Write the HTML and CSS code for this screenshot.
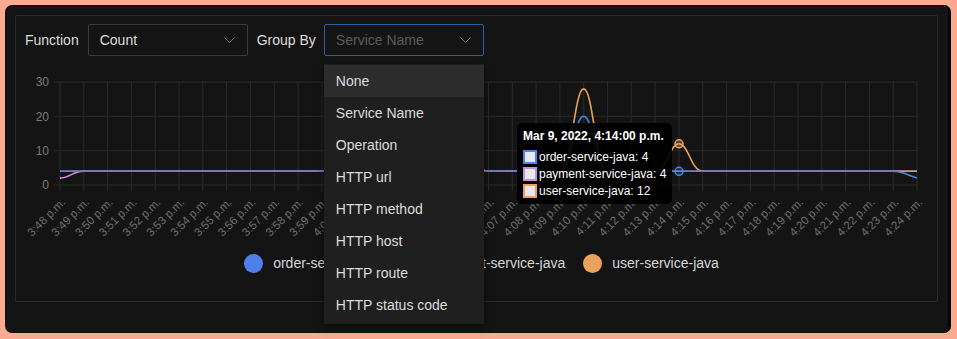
FILE: index.html
```html
<!DOCTYPE html>
<html lang="en">
<head>
    <meta charset="UTF-8">
    <meta name="viewport" content="width=device-width, initial-scale=1.0">
    <title>Service Metrics</title>
    <link rel="stylesheet" href="styles.css">
</head>
<body>
    <div class="frame">
        <div class="card">
            <div class="controls">
                <span class="label">Function</span>
                <div class="select">
                    <span class="value">Count</span>
                    <svg class="chevron" width="11" height="6" viewBox="0 0 11 6"><path d="M0.5 0.5 L5.5 5.5 L10.5 0.5"/></svg>
                </div>
                <span class="label">Group By</span>
                <div class="select select-focus">
                    <span class="value placeholder">Service Name</span>
                    <svg class="chevron" width="11" height="6" viewBox="0 0 11 6"><path d="M0.5 0.5 L5.5 5.5 L10.5 0.5"/></svg>
                    <ul class="menu">
                        <li class="active">None</li>
                        <li>Service Name</li>
                        <li>Operation</li>
                        <li>HTTP url</li>
                        <li>HTTP method</li>
                        <li>HTTP host</li>
                        <li>HTTP route</li>
                        <li>HTTP status code</li>
                    </ul>
                </div>
            </div>

            <div class="chart">
                <svg width="924" height="184" viewBox="16 60 924 184">
                    <!-- grid -->
                    <path class="grid" d="M54 82 H917 M54 116.3 H917 M54 150.7 H917 M54 185 H917
                        M60 82 V191 M83.8 82 V191 M107.6 82 V191 M131.4 82 V191 M155.2 82 V191 M179 82 V191
                        M202.8 82 V191 M226.6 82 V191 M250.4 82 V191 M274.3 82 V191 M298.1 82 V191 M321.9 82 V191
                        M345.7 82 V191 M369.5 82 V191 M393.3 82 V191 M417.1 82 V191 M440.9 82 V191 M464.7 82 V191
                        M488.5 82 V191 M512.3 82 V191 M536.1 82 V191 M559.9 82 V191 M583.7 82 V191 M607.5 82 V191
                        M631.3 82 V191 M655.1 82 V191 M679 82 V191 M702.8 82 V191 M726.6 82 V191 M750.4 82 V191
                        M774.2 82 V191 M798 82 V191 M821.8 82 V191 M845.6 82 V191 M869.4 82 V191 M893.2 82 V191
                        M917 82 V191"/>

                    <g class="y-labels">
                        <text x="49" y="86">30</text>
                        <text x="49" y="120.5">20</text>
                        <text x="49" y="155">10</text>
                        <text x="49" y="189">0</text>
                    </g>

                    <g class="x-labels">
                        <text transform="translate(66,203) rotate(-45)">3:48 p.m.</text>
                        <text transform="translate(89.8,203) rotate(-45)">3:49 p.m.</text>
                        <text transform="translate(113.6,203) rotate(-45)">3:50 p.m.</text>
                        <text transform="translate(137.4,203) rotate(-45)">3:51 p.m.</text>
                        <text transform="translate(161.2,203) rotate(-45)">3:52 p.m.</text>
                        <text transform="translate(185,203) rotate(-45)">3:53 p.m.</text>
                        <text transform="translate(208.8,203) rotate(-45)">3:54 p.m.</text>
                        <text transform="translate(232.6,203) rotate(-45)">3:55 p.m.</text>
                        <text transform="translate(256.4,203) rotate(-45)">3:56 p.m.</text>
                        <text transform="translate(280.3,203) rotate(-45)">3:57 p.m.</text>
                        <text transform="translate(304.1,203) rotate(-45)">3:58 p.m.</text>
                        <text transform="translate(327.9,203) rotate(-45)">3:59 p.m.</text>
                        <text transform="translate(351.7,203) rotate(-45)">4:00 p.m.</text>
                        <text transform="translate(375.5,203) rotate(-45)">4:01 p.m.</text>
                        <text transform="translate(399.3,203) rotate(-45)">4:02 p.m.</text>
                        <text transform="translate(423.1,203) rotate(-45)">4:03 p.m.</text>
                        <text transform="translate(446.9,203) rotate(-45)">4:04 p.m.</text>
                        <text transform="translate(470.7,203) rotate(-45)">4:05 p.m.</text>
                        <text transform="translate(494.5,203) rotate(-45)">4:06 p.m.</text>
                        <text transform="translate(518.3,203) rotate(-45)">4:07 p.m.</text>
                        <text transform="translate(542.1,203) rotate(-45)">4:08 p.m.</text>
                        <text transform="translate(565.9,203) rotate(-45)">4:09 p.m.</text>
                        <text transform="translate(589.7,203) rotate(-45)">4:10 p.m.</text>
                        <text transform="translate(613.5,203) rotate(-45)">4:11 p.m.</text>
                        <text transform="translate(637.3,203) rotate(-45)">4:12 p.m.</text>
                        <text transform="translate(661.1,203) rotate(-45)">4:13 p.m.</text>
                        <text transform="translate(685,203) rotate(-45)">4:14 p.m.</text>
                        <text transform="translate(708.8,203) rotate(-45)">4:15 p.m.</text>
                        <text transform="translate(732.6,203) rotate(-45)">4:16 p.m.</text>
                        <text transform="translate(756.4,203) rotate(-45)">4:17 p.m.</text>
                        <text transform="translate(780.2,203) rotate(-45)">4:18 p.m.</text>
                        <text transform="translate(804,203) rotate(-45)">4:19 p.m.</text>
                        <text transform="translate(827.8,203) rotate(-45)">4:20 p.m.</text>
                        <text transform="translate(851.6,203) rotate(-45)">4:21 p.m.</text>
                        <text transform="translate(875.4,203) rotate(-45)">4:22 p.m.</text>
                        <text transform="translate(899.2,203) rotate(-45)">4:23 p.m.</text>
                        <text transform="translate(923,203) rotate(-45)">4:24 p.m.</text>
                    </g>

                    <!-- series: user, payment, order (order drawn on top) -->
                    <path class="line line-user" d="M60 171.3 H440.9 C452.8 171.3 455 150.7 464.7 150.7 C474.4 150.7 476.6 171.3 488.5 171.3 H559.9 C571.8 171.3 574 88.9 583.7 88.9 C593.4 88.9 595.6 171.3 607.5 171.3 H655.1 C667 171.3 669.2 143.8 679 143.8 C688.7 143.8 690.9 171.3 702.8 171.3 H917"/>
                    <path class="line line-payment" d="M60 178.1 C70 178.1 72 171.3 83.8 171.3 H917"/>
                    <path class="line line-order" d="M60 171.3 H559.9 C571.8 171.3 574 116.3 583.7 116.3 C593.4 116.3 595.6 171.3 607.5 171.3 H893.2 C903 171.3 907 175 917 178.1"/>

                    <circle class="point point-user" cx="679" cy="143.8" r="4"/>
                    <circle class="point point-order" cx="679" cy="171.3" r="4"/>
                </svg>

                <div class="tooltip">
                    <div class="tooltip-title">Mar 9, 2022, 4:14:00 p.m.</div>
                    <div class="tooltip-row"><span class="swatch swatch-order"></span>order-service-java: 4</div>
                    <div class="tooltip-row"><span class="swatch swatch-payment"></span>payment-service-java: 4</div>
                    <div class="tooltip-row"><span class="swatch swatch-user"></span>user-service-java: 12</div>
                </div>
            </div>

            <div class="legend">
                <div class="legend-item"><span class="dot dot-order"></span>order-service-java</div>
                <div class="legend-item"><span class="dot dot-payment"></span>payment-service-java</div>
                <div class="legend-item"><span class="dot dot-user"></span>user-service-java</div>
            </div>
        </div>
    </div>
</body>
</html>
```

FILE: styles.css
```css
/* Page background */
body {
    margin: 0;
    height: 339px;
    overflow: hidden;
    background: #fbab8f;
    font-family: 'Liberation Sans', Arial, sans-serif;
}

/* Dark window */
.frame {
    margin: 5px 6px 0 5px;
    height: 328px;
    padding: 10px;
    box-sizing: border-box;
    background: #141414;
    border-radius: 7px;
    border-right: 3px solid #050505;
}

/* Panel with border */
.card {
    height: 287px;
    box-sizing: border-box;
    border: 1px solid #2b2b2b;
    border-radius: 2px;
}

/* Top controls */
.controls {
    display: flex;
    align-items: center;
    gap: 9px;
    padding: 8px 9px 0;
}

.label {
    font-size: 14px;
    color: #dcdcdc;
}

.select {
    position: relative;
    width: 160px;
    height: 32px;
    box-sizing: border-box;
    display: flex;
    align-items: center;
    justify-content: space-between;
    padding: 0 12px 0 11px;
    border: 1px solid #3a3a3a;
    border-radius: 2px;
    background: #141414;
}

.select-focus {
    border-color: #2f5e9e;
    margin-left: -1px;
}

.value {
    font-size: 14px;
    color: #dcdcdc;
}

.placeholder {
    color: #5c5c5c;
}

.chevron path {
    fill: none;
    stroke: #6e6e6e;
    stroke-width: 1;
}

/* Dropdown menu */
.menu {
    position: absolute;
    top: 39px;
    left: -1px;
    width: 160px;
    margin: 0;
    padding: 1px 0 3px;
    list-style: none;
    background: #1f1f1f;
    box-shadow: 0 3px 8px rgba(0, 0, 0, 0.5);
    z-index: 5;
}

.menu li {
    height: 32px;
    line-height: 32px;
    padding: 0 12px;
    font-size: 14px;
    color: #dcdcdc;
}

.menu li.active {
    background: #2c2c2c;
}

/* Chart */
.chart {
    position: relative;
    margin-top: 4px;
    height: 184px;
}

.chart svg {
    display: block;
}

.grid {
    fill: none;
    stroke: #2a2a2a;
    stroke-width: 1;
}

.y-labels text {
    font-size: 12px;
    fill: #7a7a7a;
    text-anchor: end;
}

.x-labels text {
    font-size: 11.5px;
    fill: #6f6f6f;
    text-anchor: end;
}

.line {
    fill: none;
    stroke-width: 1.6;
}

.line-order { stroke: #4f82e6; }
.line-payment { stroke: #c690d2; }
.line-user { stroke: #e9a15c; }

.point {
    stroke-width: 1.5;
}

.point-order {
    fill: rgba(79, 130, 230, 0.15);
    stroke: #4f82e6;
}

.point-user {
    fill: rgba(233, 161, 92, 0.3);
    stroke: #e9a15c;
}

/* Tooltip */
.tooltip {
    position: absolute;
    left: 501px;
    top: 63px;
    padding: 6px 6px 5px;
    white-space: nowrap;
    background: rgba(0, 0, 0, 0.92);
    border-radius: 5px;
    color: #fff;
    font-size: 12px;
}

.tooltip-title {
    font-weight: bold;
    margin-bottom: 5px;
}

.tooltip-row {
    display: flex;
    align-items: center;
    height: 17px;
}

.swatch {
    width: 10px;
    height: 10px;
    margin-right: 2px;
    border: 2px solid;
    background: #e8e8ec;
}

.swatch-order { border-color: #4f82e6; }
.swatch-payment { border-color: #c690d2; }
.swatch-user { border-color: #e9a15c; }

/* Legend */
.legend {
    display: flex;
    justify-content: center;
    gap: 18px;
    height: 38px;
    align-items: center;
    padding-left: 10px;
}

.legend-item {
    display: flex;
    align-items: center;
    font-size: 14px;
    color: #d6d6d6;
}

.dot {
    width: 19px;
    height: 19px;
    border-radius: 50%;
    margin-right: 10px;
}

.dot-order { background: #4c80e8; }
.dot-payment { background: #c690d2; }
.dot-user { background: #e9a15c; }
```
